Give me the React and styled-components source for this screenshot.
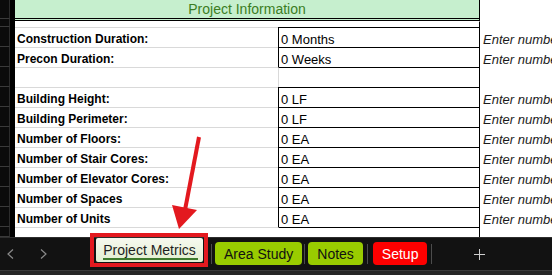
import React from "react";
import styled, { createGlobalStyle } from "styled-components";

const GlobalStyle = createGlobalStyle`
  html, body {
    margin: 0;
    padding: 0;
    background: #000;
  }
  * {
    box-sizing: border-box;
  }
`;

const Screen = styled.div`
  position: relative;
  width: 552px;
  height: 275px;
  overflow: hidden;
  display: flex;
  flex-direction: column;
  font-family: "Liberation Sans", Arial, sans-serif;
  background: #000;
`;

const Workbook = styled.div`
  display: flex;
  height: 237px;
`;

const RowHeaders = styled.div`
  width: 15px;
  display: flex;
  flex-direction: column;
  background: #000;
  border-right: 1px solid #000;
`;

const RowHead = styled.div`
  width: 10px;
  height: ${(p) => p.$h}px;
  flex-shrink: 0;
  background: #0b0b0b;
  border-right: 1px solid #2c2c2c;
  border-bottom: 1px solid #3a3a3a;
`;

const Sheet = styled.div`
  flex: 1;
  display: flex;
  flex-direction: column;
  background: #fff;
`;

const Row = styled.div`
  display: grid;
  grid-template-columns: 263px 202px 1fr;
  height: ${(p) => p.$h}px;
`;

const TitleCell = styled.div`
  grid-column: 1 / 3;
  height: 21px;
  background: #c6efce;
  border-right: 1px solid #000;
  border-bottom: 3px double #000;
  color: #3b7d23;
  font-size: 14px;
  line-height: 18px;
  text-align: center;
`;

const LabelCell = styled.div`
  display: flex;
  align-items: flex-end;
  padding-left: 2px;
  border-top: 1px solid ${(p) => (p.$line ? "#d9d9d9" : "transparent")};
  font-size: 12px;
  font-weight: bold;
  line-height: 15px;
  color: #000;
  white-space: nowrap;
`;

const ValueCell = styled.div`
  display: flex;
  align-items: flex-end;
  padding-left: 2px;
  border-right: 1px solid #000;
  border-top: 1px solid ${(p) => p.$top || "transparent"};
  border-left: 1px solid ${(p) => p.$left || "transparent"};
  font-size: 13px;
  line-height: 15px;
  color: #000;
  white-space: nowrap;
`;

const NoteCell = styled.div`
  display: flex;
  align-items: flex-end;
  padding-left: 3px;
  font-size: 13px;
  font-style: italic;
  line-height: 15px;
  color: #1a1a1a;
  white-space: nowrap;
  overflow: hidden;
`;

const TabBar = styled.div`
  display: flex;
  align-items: flex-start;
  height: 33px;
  background: #121212;
  border-top: 1px solid #2e2e2e;
`;

const BottomStrip = styled.div`
  height: 5px;
  background: #262626;
  border-top: 1px solid #3a3a3a;
`;

const NavArrows = styled.div`
  width: 96px;
  height: 100%;
  display: flex;
  align-items: center;
  gap: 26px;
  padding-left: 7px;
`;

const Tab = styled.div`
  margin-top: 4px;
  height: 23px;
  padding: 0 9px;
  border-radius: 4px;
  display: flex;
  align-items: center;
  font-size: 14px;
  background: ${(p) => p.$bg};
  color: ${(p) => p.$fg};
  white-space: nowrap;
`;

const ActiveTab = styled.div`
  position: relative;
  margin-top: 0px;
  height: 24px;
  width: 107px;
  display: flex;
  align-items: center;
  justify-content: center;
  font-size: 14px;
  color: #1e1e1e;
  background: linear-gradient(#f6f9ef, #e2eecf);
  border-radius: 2px;
  white-space: nowrap;

  &::before {
    content: "";
    position: absolute;
    left: 7px;
    right: 5px;
    bottom: 2px;
    height: 2px;
    background: #3d7a2c;
  }

  &::after {
    content: "";
    position: absolute;
    left: -6px;
    right: -5px;
    top: -5px;
    bottom: -5px;
    border: 4px solid #e3191f;
  }
`;

const Separator = styled.div`
  width: 1px;
  height: 20px;
  margin: 6px ${(p) => p.$r ?? 3}px 0 ${(p) => p.$l ?? 2}px;
  background: #4c4c4c;
`;

const AddSheet = styled.div`
  margin-left: 39px;
  height: 100%;
  display: flex;
  align-items: center;
`;

const Overlay = styled.svg`
  position: absolute;
  left: 0;
  top: 0;
  pointer-events: none;
`;

const rows = [
  { label: "Construction Duration:", value: "0 Months" },
  { label: "Precon Duration:", value: "0 Weeks" },
  { empty: true },
  { label: "Building Height:", value: "0 LF" },
  { label: "Building Perimeter:", value: "0 LF" },
  { label: "Number of Floors:", value: "0 EA" },
  { label: "Number of Stair Cores:", value: "0 EA" },
  { label: "Number of Elevator Cores:", value: "0 EA" },
  { label: "Number of Spaces", value: "0 EA" },
  { label: "Number of Units", value: "0 EA" },
];

const Chevron = ({ dir }) => (
  <svg width="7" height="10" viewBox="0 0 7 10">
    <polyline
      points={dir === "left" ? "6,0.5 1,5 6,9.5" : "1,0.5 6,5 1,9.5"}
      fill="none"
      stroke="#8a8a8a"
      strokeWidth="1.2"
    />
  </svg>
);

export default function App() {
  return (
    <Screen>
      <GlobalStyle />
      <Workbook>
        <RowHeaders>
          <RowHead $h={19} />
          <RowHead $h={8} />
          {rows.map((_, i) => (
            <RowHead key={i} $h={20} />
          ))}
          <RowHead $h={10} />
        </RowHeaders>
        <Sheet>
          <Row $h={21}>
            <TitleCell>Project Information</TitleCell>
          </Row>
          <Row $h={6}>
            <LabelCell />
            <ValueCell />
          </Row>
          {rows.map((r, i) =>
            r.empty ? (
              <Row key={i} $h={20}>
                <LabelCell $line />
                <ValueCell $top="#000" $left="#d9d9d9" />
                <NoteCell />
              </Row>
            ) : (
              <Row key={i} $h={20}>
                <LabelCell $line>{r.label}</LabelCell>
                <ValueCell $top="#000" $left="#000">
                  {r.value}
                </ValueCell>
                <NoteCell>Enter number of months</NoteCell>
              </Row>
            )
          )}
          <Row $h={10}>
            <LabelCell $line />
            <ValueCell $top="#000" />
          </Row>
        </Sheet>
      </Workbook>
      <TabBar>
        <NavArrows>
          <Chevron dir="left" />
          <Chevron dir="right" />
        </NavArrows>
        <ActiveTab>Project Metrics</ActiveTab>
        <Separator $l={8} $r={3} />
        <Tab $bg="#99cc00" $fg="#111">Area Study</Tab>
        <Separator />
        <Tab $bg="#99cc00" $fg="#111">Notes</Tab>
        <Separator $l={4} $r={5} />
        <Tab $bg="#ff0000" $fg="#fff">Setup</Tab>
        <Separator $l={4} />
        <AddSheet>
          <svg width="11" height="11" viewBox="0 0 11 11">
            <path d="M5.5 0v11M0 5.5h11" stroke="#cfcfcf" strokeWidth="1" />
          </svg>
        </AddSheet>
      </TabBar>
      <BottomStrip />
      <Overlay width="552" height="275" viewBox="0 0 552 275">
        <line x1="199" y1="137" x2="185" y2="210" stroke="#e3191f" strokeWidth="4" />
        <polygon points="172,205 197,210 179,229" fill="#e3191f" />
      </Overlay>
    </Screen>
  );
}
